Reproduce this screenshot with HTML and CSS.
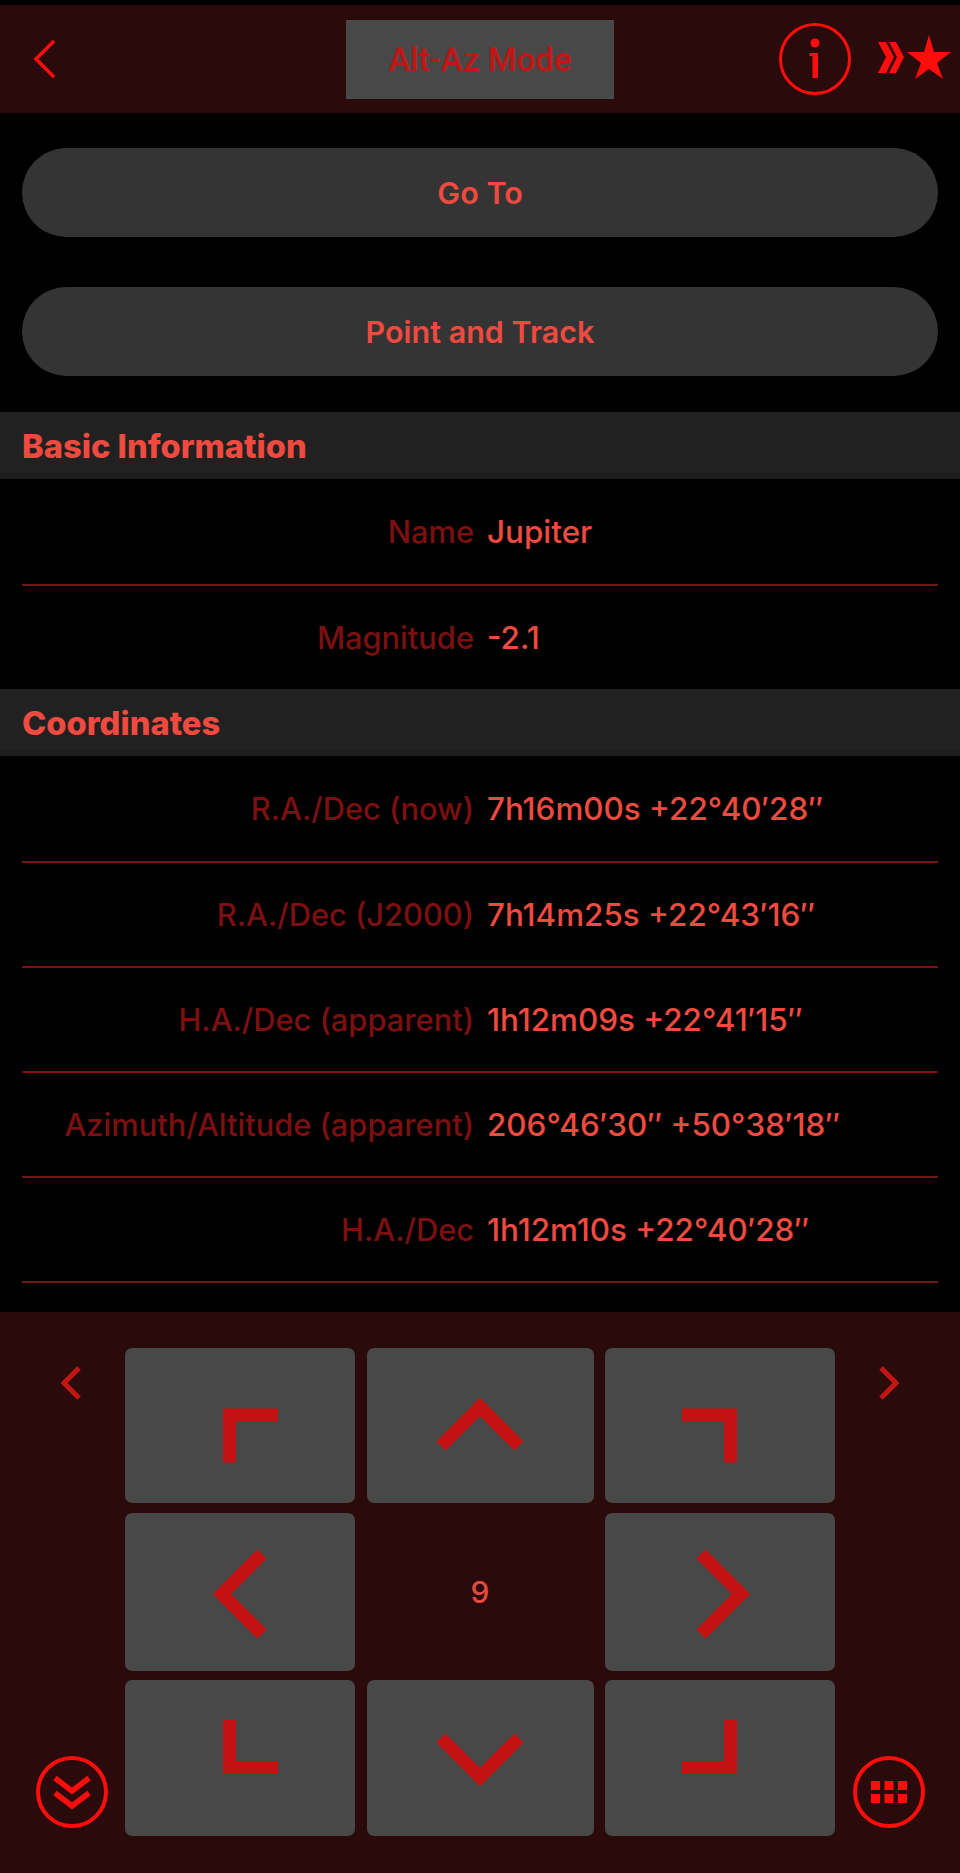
FILE: index.html
```html
<!DOCTYPE html>
<html lang="en">

<head>
    <meta charset="UTF-8">
    <meta name="viewport" content="width=device-width, initial-scale=1.0">
    <title>Jupiter</title>
    <link rel="stylesheet" href="styles.css">
</head>

<body>
    <header class="topbar">
        <div class="topbar-left">
            <svg class="back-icon" width="24" height="40" viewBox="0 0 24 40">
                <path d="M21 2 L3 20 L21 38" />
            </svg>
        </div>
        <div class="mode-button">Alt-Az Mode</div>
        <div class="topbar-right">
            <svg class="info-icon" width="72" height="72" viewBox="0 0 72 72">
                <circle class="ring" cx="36" cy="36" r="34.5" />
                <circle class="fill" cx="36" cy="20" r="4.5" />
                <path class="fill" d="M30.5 30 H39 V55 H33.5 V33 H30.5 Z" />
            </svg>
            <svg class="fav-icon" width="74" height="46" viewBox="0 0 74 46">
                <path class="fill" d="M1 7 H9 L17 22 L9 38 H1 L9 22 Z" />
                <path class="fill" d="M12 7 H19 L27 22 L19 38 H12 L20 22 Z" />
                <path class="fill" d="M52 0 L57 17 L74 17 L60 28 L66 44 L52 34 L38 44 L44 28 L30 17 L47 17 Z" />
            </svg>
        </div>
    </header>

    <main class="content">
        <div class="pill-button">Go To</div>
        <div class="pill-button pill-last">Point and Track</div>

        <h2 class="section-title">Basic Information</h2>
        <div class="row row-first"><span class="row-label">Name</span><span class="row-value">Jupiter</span></div>
        <div class="row row-last"><span class="row-label">Magnitude</span><span class="row-value">-2.1</span></div>

        <h2 class="section-title">Coordinates</h2>
        <div class="row row-top"><span class="row-label">R.A./Dec (now)</span><span class="row-value">7h16m00s +22°40′28″</span></div>
        <div class="row"><span class="row-label">R.A./Dec (J2000)</span><span class="row-value">7h14m25s +22°43′16″</span></div>
        <div class="row"><span class="row-label">H.A./Dec (apparent)</span><span class="row-value">1h12m09s +22°41′15″</span></div>
        <div class="row"><span class="row-label">Azimuth/Altitude (apparent)</span><span class="row-value">206°46′30″ +50°38′18″</span></div>
        <div class="row"><span class="row-label">H.A./Dec</span><span class="row-value">1h12m10s +22°40′28″</span></div>
    </main>

    <section class="control-panel">
        <div class="side side-left">
            <svg class="small-chevron" width="22" height="34" viewBox="0 0 22 34">
                <path d="M18 2 L3 17 L18 32" />
            </svg>
            <svg class="round-icon" width="72" height="72" viewBox="0 0 72 72">
                <circle class="ring" cx="36" cy="36" r="34" />
                <path class="double" d="M19 22 L36 35 L53 22" />
                <path class="double" d="M19 37 L36 50 L53 37" />
            </svg>
        </div>

        <div class="pad">
            <div class="pad-key">
                <svg width="76" height="76" viewBox="0 0 76 76"><path d="M27.5 74.5 V27 H76" /></svg>
            </div>
            <div class="pad-key">
                <svg width="100" height="100" viewBox="0 0 100 100"><path d="M11 70 L50 31 L89 70" /></svg>
            </div>
            <div class="pad-key">
                <svg width="76" height="76" viewBox="0 0 76 76"><path d="M48.5 74.5 V27 H0" /></svg>
            </div>
            <div class="pad-key">
                <svg width="100" height="100" viewBox="0 0 100 100"><path d="M72 12 L32 52 L72 92" /></svg>
            </div>
            <div class="pad-speed">9</div>
            <div class="pad-key">
                <svg width="100" height="100" viewBox="0 0 100 100"><path d="M31 12 L71 52 L31 92" /></svg>
            </div>
            <div class="pad-key">
                <svg width="76" height="76" viewBox="0 0 76 76"><path d="M27.5 0 V47.5 H76" /></svg>
            </div>
            <div class="pad-key">
                <svg width="100" height="100" viewBox="0 0 100 100"><path d="M11 30 L50 69 L89 30" /></svg>
            </div>
            <div class="pad-key">
                <svg width="76" height="76" viewBox="0 0 76 76"><path d="M48.5 0 V47.5 H0" /></svg>
            </div>
        </div>

        <div class="side side-right">
            <svg class="small-chevron" width="22" height="34" viewBox="0 0 22 34">
                <path d="M3 2 L18 17 L3 32" />
            </svg>
            <svg class="round-icon" width="72" height="72" viewBox="0 0 72 72">
                <circle class="ring" cx="36" cy="36" r="34" />
                <g class="fill">
                    <rect x="18" y="25" width="9" height="9" />
                    <rect x="31.5" y="25" width="9" height="9" />
                    <rect x="45" y="25" width="9" height="9" />
                    <rect x="18" y="38" width="9" height="9" />
                    <rect x="31.5" y="38" width="9" height="9" />
                    <rect x="45" y="38" width="9" height="9" />
                </g>
            </svg>
        </div>
    </section>
</body>

</html>
```

FILE: styles.css
```css
body {
    font-family: 'Inter', 'Liberation Sans', sans-serif;
    margin: 0;
    padding: 5px 0 0;
    height: 1868px;
    overflow: hidden;
    background-color: #000;
    color: #ef4a3f;
}

svg {
    display: block;
    fill: none;
}

.fill {
    fill: #ff0d0d;
}

.ring {
    stroke: #ff0d0d;
    stroke-width: 4;
}

/* top bar */
.topbar {
    height: 108px;
    background-color: #2a0a0a;
    display: grid;
    grid-template-columns: 1fr 268px 1fr;
    align-items: center;
}

.topbar-left {
    padding-left: 33px;
}

.back-icon path {
    stroke: #ff0d0d;
    stroke-width: 3.5;
}

.mode-button {
    height: 79px;
    background-color: #484848;
    color: #c41515;
    font-family: 'Roboto', sans-serif;
    font-size: 33px;
    font-weight: 500;
    display: flex;
    align-items: center;
    justify-content: center;
}

.topbar-right {
    display: flex;
    justify-content: flex-end;
    align-items: center;
    padding-right: 9px;
    gap: 26px;
}

.info-icon .ring {
    stroke-width: 3;
}

.fav-icon {
    margin-top: -2px;
}

/* scrolling part */
.content {
    height: 1199px;
    padding-top: 35px;
    box-sizing: border-box;
}

.pill-button {
    height: 89px;
    margin: 0 22px 50px;
    border-radius: 45px;
    background-color: #343434;
    font-size: 30.5px;
    font-weight: 600;
    display: flex;
    align-items: center;
    justify-content: center;
}

.pill-last {
    margin-bottom: 36px;
}

.section-title {
    margin: 0;
    height: 61px;
    border-bottom: 6px solid #1e1e1e;
    padding-left: 22px;
    background-color: #212121;
    font-size: 32.7px;
    font-weight: 800;
    line-height: 68px;
}

.row {
    height: 105px;
    margin: 0 22px;
    box-sizing: border-box;
    border-bottom: 2px solid #7a1212;
    display: grid;
    grid-template-columns: 452px 1fr;
    column-gap: 13px;
    align-items: center;
    font-size: 31.4px;
    font-weight: 500;
}

.row-first {
    height: 107px;
}

.row-top {
    height: 107px;
}

.row-last {
    height: 103px;
    border-bottom: none;
}

.row-label {
    text-align: right;
    color: #7c1010;
    font-size: 30.8px;
}

.row-value {
    color: #ef4a3f;
}

/* slew pad */
.control-panel {
    height: 561px;
    background-color: #2a0a0a;
    display: grid;
    grid-template-columns: 125px 710px 125px;
}

.side {
    height: 488px;
    margin-top: 36px;
    box-sizing: border-box;
    padding: 18px 0 8px;
    display: flex;
    flex-direction: column;
    justify-content: space-between;
    align-items: center;
}

.side-left {
    padding-left: 18px;
}

.side-right {
    padding-right: 18px;
}

.small-chevron path {
    stroke: #c41515;
    stroke-width: 5;
}

.double {
    stroke: #ff0d0d;
    stroke-width: 5.5;
}

.pad {
    padding-top: 36px;
    display: grid;
    grid-template-columns: 230px 227px 230px;
    grid-template-rows: 155px 158px 156px;
    gap: 9.5px 11.5px;
}

.pad-key {
    background-color: #484848;
    border-radius: 7px;
    display: flex;
    align-items: center;
    justify-content: center;
}

.pad-key path {
    stroke: #c41212;
    stroke-width: 13;
}

.pad-speed {
    font-size: 30px;
    font-weight: 500;
    color: #e24a3f;
    display: flex;
    align-items: center;
    justify-content: center;
}
```
